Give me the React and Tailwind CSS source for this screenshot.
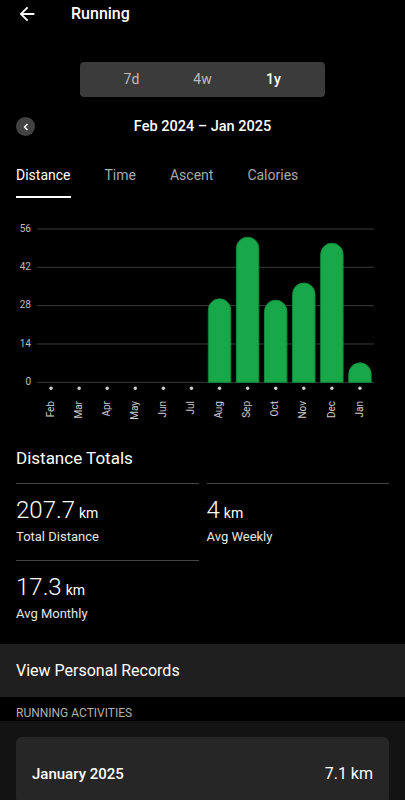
import React, { useState } from 'react';

const months = [
  { m: 'Feb', v: 0 },
  { m: 'Mar', v: 0 },
  { m: 'Apr', v: 0 },
  { m: 'May', v: 0 },
  { m: 'Jun', v: 0 },
  { m: 'Jul', v: 0 },
  { m: 'Aug', v: 30.5 },
  { m: 'Sep', v: 53.0 },
  { m: 'Oct', v: 30.0 },
  { m: 'Nov', v: 36.3 },
  { m: 'Dec', v: 50.8 },
  { m: 'Jan', v: 7.1 },
];

// chart geometry in page coordinates (viewBox starts at y=198)
const X0 = 37;
const X1 = 374;
const Y0 = 382.3;
const STEP = 38.33;
const BAND = (X1 - X0) / 12;
const BAR_W = 22.4;

function Chart() {
  const ticks = [0, 14, 28, 42, 56];
  const pxPerKm = STEP / 14;

  return (
    <svg className="block w-full h-[232px]" viewBox="0 198 405 232">
      {ticks.map((t, i) => {
        const y = Y0 - i * STEP;
        return (
          <g key={t}>
            <line x1={X0} x2={X1} y1={y} y2={y} stroke="#3a3a3a" strokeWidth="1" />
            <text x="31" y={y} textAnchor="end" dominantBaseline="middle" fill="#bdbdbd" fontSize="10" fontFamily="Roboto, sans-serif">
              {t}
            </text>
          </g>
        );
      })}
      {months.map((d, i) => {
        const cx = X0 + BAND / 2 + BAND * i;
        const h = d.v * pxPerKm;
        const x = cx - BAR_W / 2;
        const r = Math.min(BAR_W / 2, h);
        const top = Y0 - h;
        return (
          <g key={d.m}>
            {h > 0 && (
              <path
                d={`M${x},${Y0} V${top + r} A${r},${r} 0 0 1 ${x + BAR_W},${top + r} V${Y0} Z`}
                fill="#18a84a"
                stroke="#13893b"
                strokeWidth="1"
              />
            )}
            <circle cx={cx} cy="388.3" r="1.7" fill="#cfcfcf" />
            <text
              x={cx}
              y="401"
              transform={`rotate(-90 ${cx} 401)`}
              textAnchor="end"
              dominantBaseline="middle"
              fill="#cfcfcf"
              fontSize="10"
              fontFamily="Roboto, sans-serif"
            >
              {d.m}
            </text>
          </g>
        );
      })}
    </svg>
  );
}

function Stat({ value, label }) {
  return (
    <div className="border-t border-[#444] pt-[10px] pb-[15px]">
      <div className="h-[32px] flex items-baseline leading-[32px]">
        <span className="text-[24px] font-light text-white">{value}</span>
        <span className="text-[14px] text-white ml-1">km</span>
      </div>
      <div className="mt-[3px] text-[13px] leading-[16px] text-[#e6e6e6]">{label}</div>
    </div>
  );
}

export default function App() {
  const [range, setRange] = useState('1y');
  const [tab, setTab] = useState('Distance');

  return (
    <div className="w-[405px] min-h-[800px] bg-black text-white overflow-hidden" style={{ fontFamily: 'Roboto, "Noto Sans", sans-serif' }}>
      {/* header */}
      <div className="h-[28px] flex items-center pl-4">
        <svg className="w-[22px] h-[22px]" viewBox="0 0 24 24" fill="#fff">
          <path d="M20 11H7.83l5.59-5.59L12 4l-8 8 8 8 1.41-1.41L7.83 13H20v-2z" />
        </svg>
        <span className="ml-[33px] text-[16px] font-medium">Running</span>
      </div>

      {/* range selector */}
      <div className="flex justify-center mt-[34px]">
        <div className="w-[245px] h-[35px] bg-[#3b3b3b] rounded-[4px] flex px-[16px]">
          {['7d', '4w', '1y'].map((r) => (
            <button
              key={r}
              onClick={() => setRange(r)}
              className={`flex-1 text-[14px] ${range === r ? 'text-white font-medium' : 'text-[#bdbdbd]'}`}
            >
              {r}
            </button>
          ))}
        </div>
      </div>

      {/* date row */}
      <div className="relative mt-[20px] h-[19px] flex items-center justify-center">
        <div className="absolute left-4 top-0 w-[19px] h-[19px] rounded-full bg-[#424242] flex items-center justify-center">
          <svg className="w-[10px] h-[10px]" viewBox="0 0 10 10" fill="none" stroke="#fff" strokeWidth="1.6" strokeLinecap="round" strokeLinejoin="round">
            <path d="M6 2.5 3.5 5 6 7.5" />
          </svg>
        </div>
        <span className="text-[14.5px] font-medium">Feb 2024 – Jan 2025</span>
      </div>

      {/* tabs */}
      <div className="mt-[29px] flex gap-[34px] px-4">
        {['Distance', 'Time', 'Ascent', 'Calories'].map((t) => (
          <button key={t} onClick={() => setTab(t)} className="flex flex-col items-stretch">
            <span className={`text-[14px] leading-[20px] ${tab === t ? 'text-white' : 'text-[#a8a8a8]'}`}>{t}</span>
            <span className={`mt-[11px] h-[2px] ${tab === t ? 'bg-white' : 'bg-transparent'}`} />
          </button>
        ))}
      </div>

      <Chart />

      {/* totals */}
      <div className="px-4 pt-[16px]">
        <div className="text-[17px] leading-[24px]">Distance Totals</div>
        <div className="mt-[13px] grid grid-cols-2 gap-x-[8px]">
          <Stat value="207.7" label="Total Distance" />
          <Stat value="4" label="Avg Weekly" />
          <Stat value="17.3" label="Avg Monthly" />
        </div>
      </div>

      <div className="mt-[7px] h-[53px] bg-[#1f1f1f] flex items-center px-4 text-[16px]">
        View Personal Records
      </div>

      <div className="h-[24px] pt-2 px-4 text-[12px] leading-[16px] text-[#b0b0b0] uppercase">
        Running Activities
      </div>

      <div className="bg-[#131313] px-4 pt-4 pb-6">
        <div className="bg-[#262626] rounded-[6px] px-4 pt-[27px] pb-5">
          <div className="flex justify-between items-center">
            <span className="text-[15px] leading-[20px] font-medium">January 2025</span>
            <span className="text-[16px] leading-[20px]">7.1 km</span>
          </div>
        </div>
      </div>
    </div>
  );
}
